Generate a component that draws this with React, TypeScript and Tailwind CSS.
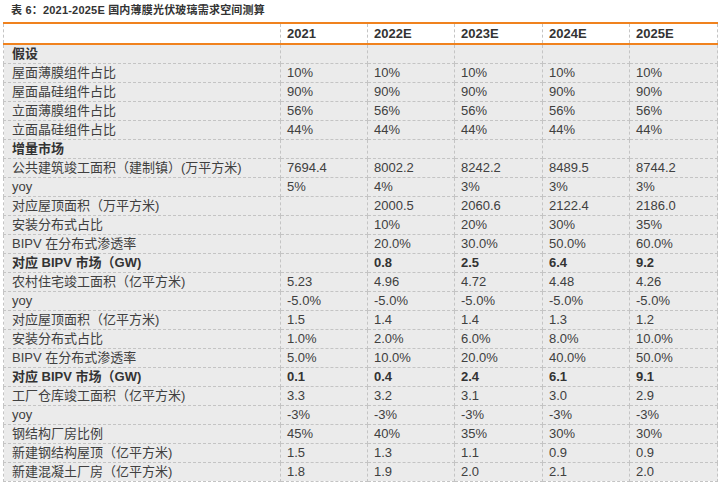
const cols = ["2021", "2022E", "2023E", "2024E", "2025E"];

type Row = { label: string; values: string[]; bold?: boolean };

const rows: Row[] = [
  { label: "假设", values: ["", "", "", "", ""], bold: true },
  { label: "屋面薄膜组件占比", values: ["10%", "10%", "10%", "10%", "10%"] },
  { label: "屋面晶硅组件占比", values: ["90%", "90%", "90%", "90%", "90%"] },
  { label: "立面薄膜组件占比", values: ["56%", "56%", "56%", "56%", "56%"] },
  { label: "立面晶硅组件占比", values: ["44%", "44%", "44%", "44%", "44%"] },
  { label: "增量市场", values: ["", "", "", "", ""], bold: true },
  { label: "公共建筑竣工面积（建制镇）(万平方米)", values: ["7694.4", "8002.2", "8242.2", "8489.5", "8744.2"] },
  { label: "yoy", values: ["5%", "4%", "3%", "3%", "3%"] },
  { label: "对应屋顶面积（万平方米)", values: ["", "2000.5", "2060.6", "2122.4", "2186.0"] },
  { label: "安装分布式占比", values: ["", "10%", "20%", "30%", "35%"] },
  { label: "BIPV 在分布式渗透率", values: ["", "20.0%", "30.0%", "50.0%", "60.0%"] },
  { label: "对应 BIPV 市场（GW)", values: ["", "0.8", "2.5", "6.4", "9.2"], bold: true },
  { label: "农村住宅竣工面积（亿平方米)", values: ["5.23", "4.96", "4.72", "4.48", "4.26"] },
  { label: "yoy", values: ["-5.0%", "-5.0%", "-5.0%", "-5.0%", "-5.0%"] },
  { label: "对应屋顶面积（亿平方米)", values: ["1.5", "1.4", "1.4", "1.3", "1.2"] },
  { label: "安装分布式占比", values: ["1.0%", "2.0%", "6.0%", "8.0%", "10.0%"] },
  { label: "BIPV 在分布式渗透率", values: ["5.0%", "10.0%", "20.0%", "40.0%", "50.0%"] },
  { label: "对应 BIPV 市场（GW)", values: ["0.1", "0.4", "2.4", "6.1", "9.1"], bold: true },
  { label: "工厂仓库竣工面积（亿平方米)", values: ["3.3", "3.2", "3.1", "3.0", "2.9"] },
  { label: "yoy", values: ["-3%", "-3%", "-3%", "-3%", "-3%"] },
  { label: "钢结构厂房比例", values: ["45%", "40%", "35%", "30%", "30%"] },
  { label: "新建钢结构屋顶（亿平方米)", values: ["1.5", "1.3", "1.1", "0.9", "0.9"] },
  { label: "新建混凝土厂房（亿平方米)", values: ["1.8", "1.9", "2.0", "2.1", "2.0"] },
];

const font = { fontFamily: '"Liberation Sans", "Noto Sans CJK SC", sans-serif' };

export default function App() {
  return (
    <div className="w-[722px] h-[486px] bg-white text-[#404040]" style={font}>
      <div className="pl-[11px] pt-[3px] h-[22px] text-[11px] tracking-[0.2px] font-bold text-[#333] leading-[14px]">
        表 6：2021-2025E 国内薄膜光伏玻璃需求空间测算
      </div>
      <table className="ml-[3px] w-[714px] table-fixed border-collapse text-[13px] leading-[17px]">
        <colgroup>
          <col className="w-[277px]" />
          <col className="w-[87px]" />
          <col className="w-[87px]" />
          <col className="w-[88px]" />
          <col className="w-[87px]" />
          <col className="w-[88px]" />
        </colgroup>
        <thead>
          <tr className="h-[21px] bg-white border-t-2 border-b-2 border-[#f0821e]">
            <th className="border-l border-dashed border-l-[#c4c4c4] border-t-2 border-b-2 border-t-[#f0821e] border-b-[#f0821e]" />
            {cols.map((c) => (
              <th
                key={c}
                className="text-left font-bold pl-[6px] border-l border-r border-dashed border-l-[#c4c4c4] border-r-[#c4c4c4] border-t-2 border-b-2 border-t-[#f0821e] border-b-[#f0821e] text-[#333]"
              >
                {c}
              </th>
            ))}
          </tr>
        </thead>
        <tbody className="bg-[#ebebeb]">
          {rows.map((r, i) => (
            <tr key={i} className={`h-[19px] ${r.bold ? "font-bold text-[#333]" : ""}`}>
              <td className="pl-[8px] whitespace-nowrap border border-dashed border-[#c4c4c4]">{r.label}</td>
              {r.values.map((v, j) => (
                <td key={j} className="pl-[6px] border border-dashed border-[#c4c4c4]">
                  {v}
                </td>
              ))}
            </tr>
          ))}
        </tbody>
      </table>
    </div>
  );
}
